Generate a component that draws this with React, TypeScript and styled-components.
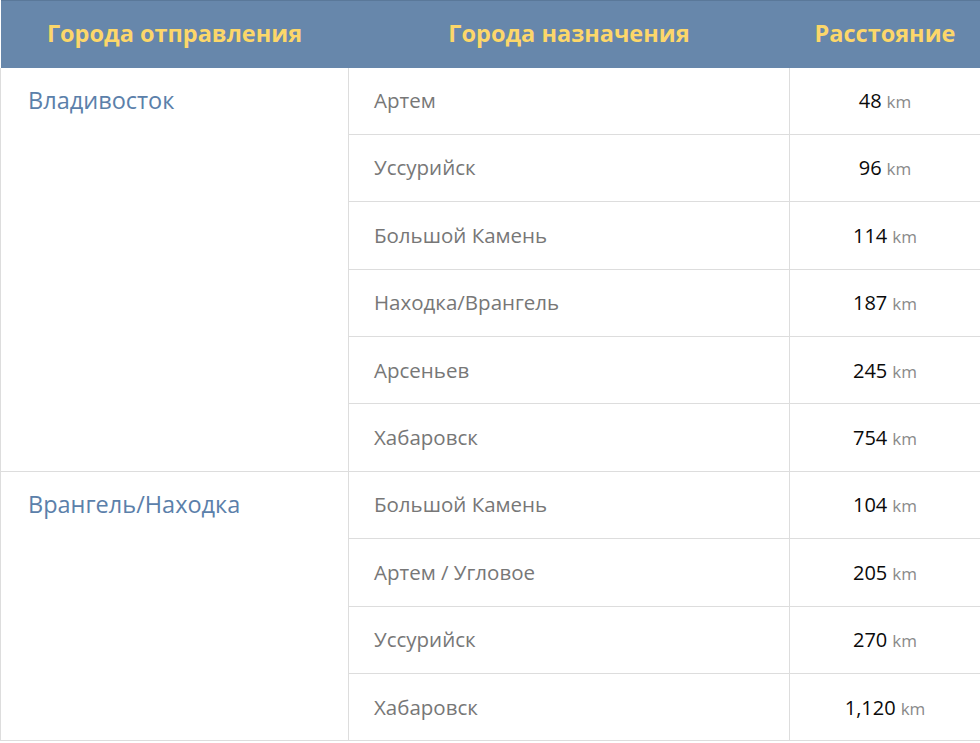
import styled, { createGlobalStyle } from 'styled-components'

const GlobalStyle = createGlobalStyle`
	body {
		margin: 0;
		background: #fff;
		font-family: 'Open Sans', 'Noto Sans', sans-serif;
	}
`

const Table = styled.table`
	width: 100%;
	border-collapse: collapse;
	table-layout: fixed;
`

const HeadCell = styled.th<{ $width: number }>`
	width: ${({ $width }) => $width}px;
	height: 67px;
	padding: 0 0 3px;
	box-sizing: border-box;
	background: #6787ab;
	border-top: 1px solid #5a7899;
	color: #fcd76a;
	font-size: 23.5px;
	font-weight: 700;
	text-align: center;
`

const Row = styled.tr`
	border-bottom: 1px solid #dddddd;
`

const Cell = styled.td`
	padding: 19.5px 27px 19.9px;
	height: 27px;
	line-height: 27px;
	font-size: 20.5px;
	vertical-align: top;
	white-space: nowrap;
	border-left: 1px solid #dddddd;
	border-right: 1px solid #dddddd;
`

const FromCell = styled(Cell)`
	color: #5b80aa;
	font-size: 23.5px;
`

const ToCell = styled(Cell)`
	padding-left: 25px;
	color: #777777;
`

const DistanceCell = styled(Cell)`
	text-align: center;
	color: #0a0a0a;
	font-size: 20px;
`

const Unit = styled.span`
	margin-left: 5px;
	font-size: 17px;
	line-height: 1;
	color: #8a8a8a;
`

type Group = { from: string; routes: [string, string][] }

const groups: Group[] = [
	{
		from: 'Владивосток',
		routes: [
			['Артем', '48'],
			['Уссурийск', '96'],
			['Большой Камень', '114'],
			['Находка/Врангель', '187'],
			['Арсеньев', '245'],
			['Хабаровск', '754'],
		],
	},
	{
		from: 'Врангель/Находка',
		routes: [
			['Большой Камень', '104'],
			['Артем / Угловое', '205'],
			['Уссурийск', '270'],
			['Хабаровск', '1,120'],
		],
	},
]

const App = () => {
	return (
		<>
			<GlobalStyle />
			<Table>
				<thead>
					<tr>
						<HeadCell $width={348}>Города отправления</HeadCell>
						<HeadCell $width={441}>Города назначения</HeadCell>
						<HeadCell $width={191}>Расстояние</HeadCell>
					</tr>
				</thead>
				<tbody>
					{groups.map((group) =>
						group.routes.map(([to, km], i) => (
							<Row key={group.from + to}>
								{i === 0 && <FromCell rowSpan={group.routes.length}>{group.from}</FromCell>}
								<ToCell>{to}</ToCell>
								<DistanceCell>
									{km}
									<Unit>km</Unit>
								</DistanceCell>
							</Row>
						))
					)}
				</tbody>
			</Table>
		</>
	)
}

export default App
